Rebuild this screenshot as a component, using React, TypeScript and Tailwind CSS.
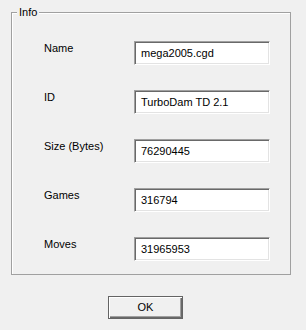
const rows = [
  { label: "Name", value: "mega2005.cgd" },
  { label: "ID", value: "TurboDam TD 2.1" },
  { label: "Size (Bytes)", value: "76290445" },
  { label: "Games", value: "316794" },
  { label: "Moves", value: "31965953" },
];

const App = () => {
  return (
    <div
      className="w-[306px] h-[330px] bg-[#f0f0f0] pt-[12px] text-[11px] text-black"
      style={{ fontFamily: '"Liberation Sans", Arial, sans-serif' }}
    >
      {/* Info group */}
      <div className="relative ml-[11px] w-[280px] h-[263px] border border-[#a0a0a0] shadow-[inset_1px_1px_0_#ffffff]">
        <span className="absolute left-[5px] top-[-7px] bg-[#f0f0f0] px-[2px] leading-[13px]">
          Info
        </span>
        <div className="flex flex-col gap-[25px] pt-[28px] pl-[32px]">
          {rows.map((row) => (
            <div key={row.label} className="flex items-start">
              <div className="w-[90px] pt-[1px] leading-[13px]">{row.label}</div>
              <div className="w-[136px] h-[24px] flex items-center pl-[6px] bg-white border border-t-[#a0a0a0] border-l-[#a0a0a0] border-b-white border-r-white shadow-[inset_1px_1px_0_#696969,inset_-1px_-1px_0_#e3e3e3]">
                {row.value}
              </div>
            </div>
          ))}
        </div>
      </div>

      {/* Buttons */}
      <div className="flex pl-[108px] pt-[21px]">
        <button className="w-[75px] h-[23px] flex items-center justify-center bg-[#f0f0f0] border border-[#646464] shadow-[inset_1px_1px_0_#ffffff,inset_-1px_-1px_0_#696969,inset_-2px_-2px_0_#a0a0a0]">
          OK
        </button>
      </div>
    </div>
  );
};

export default App;
